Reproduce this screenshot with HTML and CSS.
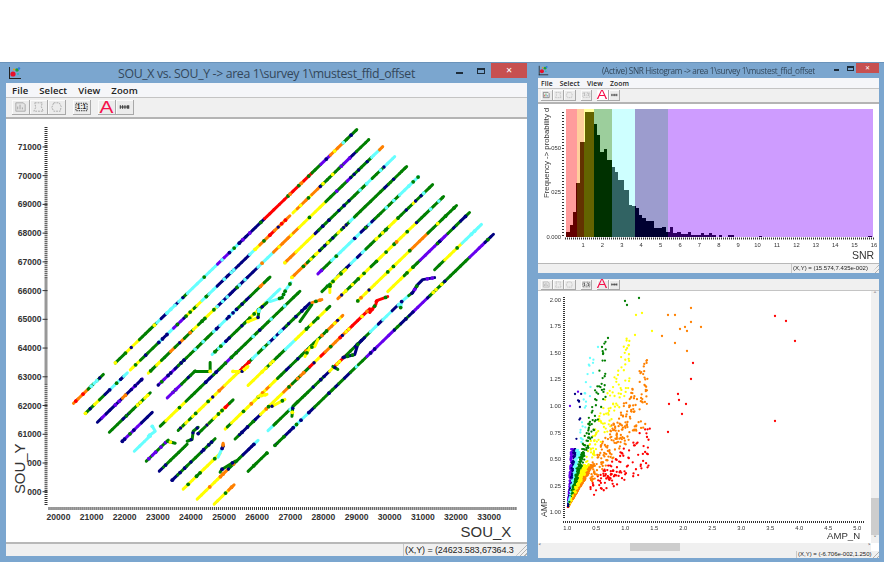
FILE: index.html
```html
<!DOCTYPE html>
<html lang="en">
<head>
    <meta charset="UTF-8">
    <meta name="viewport" content="width=device-width, initial-scale=1.0">
    <title>SOU_X vs. SOU_Y</title>
    <link rel="stylesheet" href="styles.css">
</head>
<body>
    <svg class="sprite" width="0" height="0">
        <symbol id="ico-app" viewBox="0 0 14 14">
            <rect x="1" y="1" width="1" height="12" fill="#222"/>
            <rect x="1" y="12" width="12" height="1" fill="#222"/>
            <circle cx="5" cy="8" r="2.6" fill="#e8102a"/>
            <circle cx="9" cy="4" r="1.8" fill="#1c9c3c"/>
            <circle cx="11" cy="2.5" r="1.2" fill="#2b7de0"/>
            <circle cx="10" cy="8" r="1" fill="#20b8c8"/>
            <circle cx="6" cy="3.5" r="1" fill="#e8a010"/>
        </symbol>
        <symbol id="ico-doc" viewBox="0 0 18 15">
            <path d="M4 3h8l2 2v7H4z" fill="#e4e4e4" stroke="#a8a8a8"/>
            <path d="M6 10V7M8.500 10V5M11 10V8" stroke="#a0a0a0"/>
        </symbol>
        <symbol id="ico-doc-on" viewBox="0 0 18 15">
            <path d="M4 3h8l2 2v7H4z" fill="#eee" stroke="#555"/>
            <path d="M6 10V7" stroke="#d01818"/>
            <path d="M8.500 10V5" stroke="#108a28"/>
            <path d="M11 10V8" stroke="#1838c0"/>
        </symbol>
        <symbol id="ico-sel" viewBox="0 0 18 15">
            <path d="M5 3h8l-1 4 2 5H4l2-4z" fill="none" stroke="#a8a8a8" stroke-dasharray="2 1"/>
        </symbol>
        <symbol id="ico-poly" viewBox="0 0 18 15">
            <path d="M6 3h6l2 4-1 5H6L4 8z" fill="none" stroke="#a8a8a8" stroke-dasharray="2 1"/>
        </symbol>
        <symbol id="ico-one" viewBox="0 0 18 15">
            <path d="M3 3.500h12v8H3z" fill="none" stroke="currentColor" stroke-dasharray="1.500 1"/>
            <text x="9" y="10" text-anchor="middle" font-family="Liberation Sans, sans-serif" font-size="7" font-weight="700" fill="currentColor">1:1</text>
        </symbol>
        <symbol id="ico-ticks" viewBox="0 0 18 15">
            <path d="M4 7.500h10M4.500 5.500v4M7 5.500v4M9.500 5.500v4M12 5.500v4M13.500 5.500v4" stroke="#333" fill="none"/>
        </symbol>
    </svg>

    <div class="desktop">
        <section class="win win-main">
            <header class="titlebar">
                <svg class="app-icon"><use href="#ico-app"/></svg>
                <span class="title-text">SOU_X vs. SOU_Y -&gt; area 1\survey 1\mustest_ffid_offset</span>
                <span class="btn-min"></span>
                <span class="btn-max"></span>
                <span class="btn-close">&#x2715;</span>
            </header>
            <nav class="menubar">
                <span>File</span><span>Select</span><span>View</span><span>Zoom</span>
            </nav>
            <div class="toolbar">
                <button class="tool"><svg><use href="#ico-doc"/></svg></button>
                <button class="tool"><svg><use href="#ico-sel"/></svg></button>
                <button class="tool"><svg><use href="#ico-poly"/></svg></button>
                <button class="tool tool-gap on"><svg><use href="#ico-one"/></svg></button>
                <button class="tool tool-gap tool-a"><span>A</span></button>
                <button class="tool"><svg><use href="#ico-ticks"/></svg></button>
            </div>
            <div class="canvas"><svg id="survey" class="plot" viewBox="6 119 521 424"></svg></div>
            <footer class="statusbar">
                <div class="status-pane">(X,Y) = (24623.583,67364.3</div>
                <div class="grip"></div>
            </footer>
        </section>

        <div class="side">
            <section class="win win-hist">
                <header class="titlebar">
                    <svg class="app-icon"><use href="#ico-app"/></svg>
                    <span class="title-text">(Active) SNR Histogram -&gt; area 1\survey 1\mustest_ffid_offset</span>
                    <span class="btn-min"></span>
                    <span class="btn-max"></span>
                    <span class="btn-close">&#x2715;</span>
                </header>
                <nav class="menubar">
                    <span>File</span><span>Select</span><span>View</span><span>Zoom</span>
                </nav>
                <div class="toolbar">
                    <button class="tool"><svg><use href="#ico-doc-on"/></svg></button>
                    <button class="tool"><svg><use href="#ico-sel"/></svg></button>
                    <button class="tool"><svg><use href="#ico-poly"/></svg></button>
                    <button class="tool tool-gap"><svg class="muted"><use href="#ico-one"/></svg></button>
                    <button class="tool tool-gap tool-a pressed"><span>A</span></button>
                    <button class="tool"><svg><use href="#ico-ticks"/></svg></button>
                </div>
                <div class="canvas"><svg id="histogram" class="plot" viewBox="538 104 341 159"></svg></div>
                <footer class="statusbar">
                    <div class="status-pane">(X,Y) = (15.574,7.435e-002)</div>
                    <div class="grip"></div>
                </footer>
            </section>

            <section class="win win-scatter">
                <div class="toolbar">
                    <button class="tool"><svg><use href="#ico-doc"/></svg></button>
                    <button class="tool"><svg><use href="#ico-sel"/></svg></button>
                    <button class="tool"><svg><use href="#ico-poly"/></svg></button>
                    <button class="tool tool-gap on"><svg><use href="#ico-one"/></svg></button>
                    <button class="tool tool-gap tool-a"><span>A</span></button>
                    <button class="tool"><svg><use href="#ico-ticks"/></svg></button>
                </div>
                <div class="scroll-area">
                    <div class="canvas"><svg id="scatter" class="plot" viewBox="538 291 333 252"></svg></div>
                    <div class="vscroll">
                        <span class="arrow">&#x2C4;</span>
                        <span class="vthumb"></span>
                        <span class="arrow">&#x2C5;</span>
                    </div>
                    <div class="hscroll">
                        <span class="arrow">&#x2C2;</span>
                        <span class="hthumb"></span>
                        <span class="arrow">&#x2C3;</span>
                    </div>
                </div>
                <footer class="statusbar">
                    <div class="status-pane">(X,Y) = (-6.706e-002,1.250)</div>
                    <div class="grip"></div>
                </footer>
            </section>
        </div>
    </div>

    <script src="plots.js"></script>
</body>
</html>
```

FILE: styles.css
```css
* {
    margin: 0;
    padding: 0;
    box-sizing: border-box;
}

body {
    font-family: "Open Sans", "Liberation Sans", sans-serif;
    background: white;
    color: #222;
    overflow: hidden;
}

.sprite {
    position: absolute;
}

.desktop {
    display: flex;
    height: 562px;
    padding-top: 62px;
    filter: blur(0.3px);
}

.win {
    display: flex;
    flex-direction: column;
    background: #7ba6cf;
    border-top: 1px solid #6a93ba;
}

.win-main {
    width: 534px;
    padding: 0 7px 6px 6px;
}

.side {
    flex: 1;
    display: flex;
    flex-direction: column;
}

.win-hist {
    height: 214px;
    padding: 0 5px 3px 4px;
}

.win-scatter {
    flex: 1;
    padding: 3px 5px 4px 4px;
    border-top: none;
}

/* Title bars */
.titlebar {
    height: 20px;
    flex: none;
    display: flex;
    align-items: center;
    position: relative;
}

.title-text {
    flex: 1;
    text-align: center;
    font-size: 12.300px;
    letter-spacing: -0.35px;
    color: #33475a;
    white-space: nowrap;
    padding-right: 16px;
}

.app-icon {
    width: 14px;
    height: 14px;
    margin-left: 2px;
}

.btn-min {
    position: absolute;
    left: 450px;
    top: 9px;
    width: 7px;
    height: 2px;
    background: #1d2c3a;
}

.btn-max {
    position: absolute;
    left: 471px;
    top: 5px;
    width: 8px;
    height: 6px;
    border: 1px solid #1d2c3a;
    border-top-width: 2px;
}

.btn-close {
    position: absolute;
    right: 0;
    top: 0;
    width: 36px;
    height: 15px;
    background: #c75050;
    color: white;
    font-family: "DejaVu Sans", sans-serif;
    font-size: 8px;
    font-weight: 700;
    line-height: 15px;
    text-align: center;
}

.win-hist .titlebar {
    height: 15px;
}

.win-hist .title-text {
    font-size: 8.200px;
    letter-spacing: -0.33px;
    padding-right: 11px;
}

.win-hist .app-icon {
    width: 11px;
    height: 11px;
    margin-left: 0;
}

.win-hist .btn-min {
    left: 296px;
    top: 6px;
    width: 5px;
}

.win-hist .btn-max {
    left: 309px;
    top: 3px;
    width: 7px;
    height: 5px;
}

.win-hist .btn-close {
    width: 23px;
    height: 10px;
    line-height: 10px;
    font-size: 6px;
}

/* Menus and toolbars */
.menubar {
    height: 14px;
    flex: none;
    display: flex;
    align-items: center;
    gap: 11px;
    padding-left: 6px;
    background: #f5f6f9;
    font-size: 9.500px;
    font-weight: 600;
    letter-spacing: 0.1px;
}

.win-hist .menubar {
    height: 10px;
    gap: 7px;
    padding-left: 3px;
    font-size: 6.800px;
}

.toolbar {
    height: 22px;
    flex: none;
    display: flex;
    align-items: center;
    padding-left: 6px;
    background: #f0f0f0;
    border-top: 1px solid #c4c4c4;
    border-bottom: 2px solid #b4b4b4;
}

.win-hist .toolbar {
    height: 16px;
    padding-left: 3px;
}

.win-scatter .toolbar {
    height: 12px;
    padding-left: 3px;
    border-top: none;
    border-bottom: 1px solid #c4c4c4;
}

.tool {
    width: 18px;
    height: 15px;
    display: flex;
    align-items: center;
    justify-content: center;
    background: #ececec;
    border: none;
    border-right: 1px solid #a8a8a8;
    border-bottom: 1px solid #a8a8a8;
    box-shadow: inset 1px 1px 0 #fbfbfb;
    font-family: "Liberation Sans", sans-serif;
}

.tool svg {
    width: 100%;
    height: 100%;
    color: #222;
}

.tool svg.muted {
    color: #a8a8a8;
}

.tool-gap {
    margin-left: 7px;
}

.tool-a {
    color: #f5104a;
    font-size: 16px;
    line-height: 15px;
}

.tool-a span {
    display: inline-block;
    transform: scaleX(1.3);
}

.tool.pressed {
    background: white;
}

.win-hist .tool,
.win-scatter .tool {
    width: 11.500px;
    height: 11px;
}

.win-scatter .tool {
    height: 10px;
}

.win-hist .tool-gap,
.win-scatter .tool-gap {
    margin-left: 5px;
}

.win-hist .tool-a,
.win-scatter .tool-a {
    font-size: 12px;
}

/* Plot areas */
.canvas {
    flex: 1;
    min-height: 0;
    background: white;
    display: flex;
}

.plot {
    width: 100%;
    height: 100%;
    font-family: "Liberation Sans", sans-serif;
}

.plot text {
    fill: #333;
}

.scroll-area {
    flex: 1;
    min-height: 0;
    display: grid;
    grid-template-columns: 1fr 8px;
    grid-template-rows: 1fr 8px;
    background: white;
}

.vscroll,
.hscroll {
    display: flex;
    align-items: center;
    justify-content: space-between;
    background: #f0f0f0;
    color: #555;
    font-family: "DejaVu Sans", sans-serif;
    font-size: 7px;
    line-height: 8px;
}

.vscroll {
    flex-direction: column;
}

.vthumb {
    width: 8px;
    height: 37px;
    margin-top: auto;
    background: #cdcdcd;
}

.hscroll {
    position: relative;
}

.hthumb {
    position: absolute;
    left: 92px;
    top: 0;
    width: 50px;
    height: 8px;
    background: #cdcdcd;
}

/* Status bars */
.statusbar {
    height: 14px;
    flex: none;
    display: flex;
    justify-content: flex-end;
    background: #f0f0f0;
    border-top: 2px solid #b8b8b8;
}

.status-pane {
    width: 113px;
    overflow: hidden;
    white-space: nowrap;
    padding-left: 1px;
    border-left: 1px solid #c8c8c8;
    font-family: "Liberation Sans", sans-serif;
    font-size: 9px;
    letter-spacing: -0.1px;
    line-height: 12px;
}

.grip {
    width: 11px;
    background: repeating-linear-gradient(135deg, #f0f0f0 0 2px, #b0b0b0 2px 3px);
    clip-path: polygon(100% 0, 100% 100%, 0 100%);
}

.win-hist .statusbar {
    height: 10px;
    border-top-width: 1px;
}

.win-scatter .statusbar {
    height: 7px;
    border-top: none;
}

.win-hist .status-pane {
    width: 81px;
    font-size: 6px;
    letter-spacing: 0;
    line-height: 9px;
}

.win-scatter .status-pane {
    width: 76px;
    font-size: 6px;
    letter-spacing: 0;
    line-height: 7px;
}

.win-hist .grip,
.win-scatter .grip {
    width: 7px;
}
```

FILE: plots.js
```js
const NS = 'http://www.w3.org/2000/svg';

const COLORS = {
    r: '#ff0000',
    o: '#ff8000',
    y: '#ffff00',
    g: '#007f00',
    c: '#66ffff',
    b: '#000080',
    p: '#6600ee'
};

// Small repeatable random so the picture stays the same between loads
let seed = 12345;
function rand() {
    seed = (seed * 16807) % 2147483647;
    return seed / 2147483647;
}

function between(low, high) {
    return low + rand() * (high - low);
}

function add(parent, tag, attrs, text) {
    const el = document.createElementNS(NS, tag);
    Object.keys(attrs).forEach(key => el.setAttribute(key, attrs[key]));
    if (text !== undefined) el.textContent = text;
    parent.appendChild(el);
    return el;
}

function label(parent, x, y, size, anchor, text, extra) {
    return add(parent, 'text', Object.assign({
        x: x, y: y, 'font-size': size, 'text-anchor': anchor
    }, extra || {}), text);
}

function dotted(parent, x1, y1, x2, y2, width, dash) {
    add(parent, 'line', {
        x1: x1, y1: y1, x2: x2, y2: y2,
        stroke: '#333', 'stroke-width': width, 'stroke-dasharray': dash
    });
}

// Survey map: parallel shot lines, each cut into coloured zones
const SLOPE = 0.966;
const SHOT_LINES = [
    { from: [73, 404], parts: [[73, 103], [115, 357]],
      zones: '85or 103gc 125gy 140yg 155gy 175bc 190gc 215cb 225pc 240cb 250bp 262bg 310ro 320yg 330pb 340oy 350gc 357gb' },
    { from: [85, 414], parts: [[85, 127], [130, 290], [293, 369]],
      zones: '103gy 127cb 140yg 155gb 170cb 185pb 200yg 215cg 232bc 250bc 262oy 290or 320oy 335gy 345gp 355bp 369gg' },
    { from: [97, 423], parts: [[97, 142], [148, 383]],
      zones: '120bp 130bo 142pb 160yg 190go 200gy 215yg 235bc 255bc 270co 290oy 305yo 320yg 330gy 350gp 370gc 375cc 383oo' },
    { from: [109, 433], parts: [[109, 150], [158, 270], [285, 395]],
      zones: '122gb 135bg 150gy 177pb 195gb 215gc 235cb 255gb 270go 295oy 315yg 340gb 355gb 370gc 385gc 395cc' },
    { from: [122, 442], parts: [[122, 152], [167, 195], [212, 280], [292, 407]],
      zones: '140pb 152bc 180gp 195gb 225cg 245gb 265yg 280cc 305oy 325gy 345gy 365gc 385gb 400gy 407gy' },
    { from: [134, 452], parts: [[134, 150], [160, 300], [318, 419]],
      zones: '150cc 190yg 205gy 225gb 240pg 255gc 270gb 285gc 300go 330gp 345cb 360cb 375bc 395gc 410cc 419cc' },
    { from: [146, 462], parts: [[146, 168], [178, 310], [322, 433]],
      zones: '168gp 190gy 210yg 235yo 250gr 265gc 285bc 310gb 320gy 335cg 350bg 365cb 385gy 400yg 415gy 433gc' },
    { from: [159, 472], parts: [[159, 187], [198, 233], [248, 330], [338, 444]],
      zones: '187gb 205gb 225yg 245gr 260yo 280gy 295cb 330yg 345yo 355gy 375yg 395yg 415yo 430gy 444gc' },
    { from: [172, 481], parts: [[172, 215], [225, 343], [358, 457]],
      zones: '195gb 225gb 245yg 275yo 290gb 305gy 325go 345oy 365yo 385yo 405yg 425oy 445gy 457gg' },
    { from: [183, 490], parts: [[183, 220], [235, 370], [388, 470]],
      zones: '210yg 235yo 250gb 260bg 290yo 305go 325ry 345or 365ry 385ro 400yo 420yg 445pb 458gb 470gb' },
    { from: [197, 500], parts: [[197, 258], [268, 400], [435, 482]],
      zones: '220yo 235go 250gb 265cb 300gc 325gb 345ry 370gb 400cb 420pb 440yg 460yg 470cc 482cc' },
    { from: [214, 505], parts: [[214, 234], [248, 267], [275, 494]],
      zones: '234yo 267gg 285bg 310cb 345gb 365gc 390pb 410gb 430pb 445gy 470gy 485pb 494bc' }
];

// Places where a line wanders off its straight path
const JOGS = [
    ['yg', [[330, 293], [330, 285], [338, 277], [346, 270]]],
    ['rr', [[370, 313], [376, 305], [377, 301], [388, 297]]],
    ['cb', [[401, 308], [402, 302], [409, 296]]],
    ['gc', [[409, 296], [413, 293]]],
    ['bp', [[413, 293], [418, 285], [423, 280], [435, 278]]],
    ['gy', [[300, 322], [312, 305]]],
    ['oo', [[312, 303], [322, 300]]],
    ['yg', [[305, 357], [310, 348], [315, 347], [318, 340]]],
    ['bg', [[343, 358], [355, 355], [358, 345], [365, 338]]],
    ['gb', [[333, 367], [338, 370]]],
    ['yo', [[272, 407], [285, 400]]],
    ['gy', [[292, 417], [293, 407], [298, 402]]],
    ['cg', [[270, 302], [282, 298], [286, 290], [291, 283]]],
    ['gy', [[195, 372], [210, 372], [210, 363]]],
    ['yy', [[233, 372], [242, 372], [248, 367]]],
    ['cc', [[152, 427], [155, 432], [148, 437]]],
    ['gy', [[167, 442], [175, 444]]],
    ['gb', [[187, 442], [192, 440], [193, 432], [198, 428]]],
    ['yy', [[248, 322], [258, 318]]],
    ['gc', [[258, 318], [259, 310], [267, 303]]],
    ['cb', [[218, 458], [223, 447]]],
    ['oo', [[223, 447], [223, 444]]],
    ['gb', [[220, 473], [222, 470], [235, 462]]],
    ['yy', [[258, 397], [267, 395]]]
];

const INK = { fill: 'none', 'stroke-width': 3, 'stroke-linecap': 'round', 'stroke-linejoin': 'round' };

function speckle(svg, x, y, main, speck) {
    const roll = rand();
    if (roll < 0.26) {
        add(svg, 'circle', { cx: x, cy: y, r: 1.9, fill: COLORS[speck] });
    } else if (roll < 0.35 && main !== 'g') {
        add(svg, 'circle', { cx: x, cy: y, r: 1.9, fill: COLORS.g });
    } else if (roll < 0.37 && main !== 'b') {
        add(svg, 'circle', { cx: x, cy: y, r: 1.7, fill: COLORS.b });
    }
}

function drawSurvey() {
    const svg = document.getElementById('survey');

    // Axes
    dotted(svg, 45.500, 127, 45.500, 507, 3, '1 1');
    dotted(svg, 48, 509.500, 518, 509.500, 3, '1 1');
    for (let v = 59000; v <= 71000; v += 1000) {
        const y = 147 + (71000 - v) * 0.0288;
        add(svg, 'line', { x1: 42, y1: y, x2: 47, y2: y, stroke: '#333' });
        // The rotated axis title hides the front of the two lowest labels
        const text = v <= 60000 ? '000' : v;
        label(svg, 41, y + 3, 8.600, 'end', text, { 'font-weight': 700 });
    }
    for (let v = 20000; v <= 33000; v += 1000) {
        const x = 58 + (v - 20000) * 0.0332;
        label(svg, x, 521, 8.600, 'middle', v, { 'font-weight': 700 });
    }

    label(svg, 24, 495, 15, 'start', 'SOU_Y', { transform: 'rotate(-90 24 495)' });
    label(svg, 461, 538, 15, 'start', 'SOU_X');

    // Shot lines
    SHOT_LINES.forEach(line => {
        const zones = line.zones.split(' ').map(z => ({
            end: parseInt(z, 10),
            main: z[z.length - 2],
            speck: z[z.length - 1]
        }));
        const yAt = x => line.from[1] - (x - line.from[0]) * SLOPE;
        line.parts.forEach(part => {
            let x = part[0];
            while (x < part[1]) {
                const next = Math.min(x + between(2, 6), part[1]);
                const zone = zones.find(z => x < z.end) || zones[zones.length - 1];
                const key = rand() < 0.18 ? zone.speck : zone.main;
                add(svg, 'line', Object.assign({}, INK, {
                    x1: x, y1: yAt(x), x2: next, y2: yAt(next), stroke: COLORS[key]
                }));
                speckle(svg, x, yAt(x), zone.main, zone.speck);
                x = next;
            }
        });
    });

    JOGS.forEach(jog => {
        add(svg, 'polyline', Object.assign({}, INK, {
            points: jog[1].map(p => p.join(',')).join(' '),
            stroke: COLORS[jog[0][0]]
        }));
        for (let i = 1; i < jog[1].length; i++) {
            const a = jog[1][i - 1];
            const b = jog[1][i];
            for (let t = 0; t < 1; t += 0.4) {
                speckle(svg, a[0] + (b[0] - a[0]) * t, a[1] + (b[1] - a[1]) * t, jog[0][0], jog[0][1]);
            }
        }
    });
}

// SNR histogram: coloured bands with darker bars on top
const BANDS = [
    [566, 577, '#ff9c9c', '#630000'],
    [577, 584, '#ffce9c', '#633100'],
    [584, 594, '#ffff9c', '#636300'],
    [594, 611.500, '#9cce9c', '#003100'],
    [611.500, 634.500, '#ceffff', '#316363'],
    [634.500, 668, '#9c9cce', '#000031'],
    [668, 873, '#ce9cff', '#310063']
];

// [left, right, top] of each bar
const BARS = [
    [566.300, 569.700, 231.700], [569.700, 573, 225], [573, 576.300, 211.700], [576.300, 579.700, 183],
    [579.700, 585, 142], [585, 589, 111.700], [589, 594, 112], [594, 597.300, 124],
    [597.300, 599.700, 135], [599.700, 604, 152], [604, 607.300, 149], [607.300, 611.700, 160],
    [611.700, 615, 167], [615, 618.300, 172], [618.300, 624, 180], [624, 629, 190],
    [629, 632.300, 205], [632.300, 635.700, 206], [635.700, 639.300, 208], [639.300, 642.300, 215],
    [642.300, 646.300, 218], [646.300, 654, 220.700], [654, 662.300, 228], [662.300, 665.700, 227],
    [665.700, 669.700, 232], [669.700, 673.300, 227], [673.300, 677.300, 233], [677.300, 680.700, 232],
    [680.700, 688, 234], [688, 691.300, 232], [691.300, 700.700, 235], [700.700, 704, 233],
    [704, 709, 235], [709, 711.700, 233], [712.300, 715.700, 235], [719, 722.300, 235],
    [728.300, 734, 235], [759, 762.300, 236], [868.300, 871.700, 235.500]
];

function drawHistogram() {
    const svg = document.getElementById('histogram');
    const bottom = 237;

    BANDS.forEach(band => {
        add(svg, 'rect', {
            x: band[0], y: 109, width: band[1] - band[0], height: bottom - 109,
            fill: band[2], 'shape-rendering': 'crispEdges'
        });
    });

    // A bar crossing a band edge is split so each side takes its band's colour
    BARS.forEach(bar => {
        BANDS.forEach(band => {
            const left = Math.max(bar[0], band[0]);
            const right = Math.min(bar[1], band[1]);
            if (right > left) {
                add(svg, 'rect', {
                    x: left, y: bar[2], width: right - left, height: bottom - bar[2],
                    fill: band[3], 'shape-rendering': 'crispEdges'
                });
            }
        });
    });

    dotted(svg, 563, 112, 563, 238, 2, '1 2');
    dotted(svg, 565, 238.500, 874, 238.500, 2, '1 1');
    for (let i = 1; i <= 16; i++) {
        label(svg, 563.600 + i * 19.4, 247, 5.800, 'middle', i);
    }
    label(svg, 561, 239, 5.800, 'end', '0.000');
    label(svg, 561, 194, 5.800, 'end', '025');
    label(svg, 561, 150, 5.800, 'end', '050');
    label(svg, 549, 198, 7.800, 'start', 'Frequency -> probability d', { transform: 'rotate(-90 549 198)' });
    label(svg, 852, 259, 10.500, 'start', 'SNR');
}

// Amplitude scatter: colour follows the steepness of the ray from the origin
function rayColor(slope) {
    if (slope < 1.05) return COLORS.r;
    if (slope < 1.9) return COLORS.o;
    if (slope < 2.9) return COLORS.y;
    if (slope < 4.5) return COLORS.g;
    if (slope < 7) return COLORS.c;
    if (slope < 11) return COLORS.b;
    return COLORS.p;
}

function drawScatter() {
    const svg = document.getElementById('scatter');
    const ox = 568;
    const oy = 507;

    dotted(svg, 564, 297, 564, 519, 2, '1 1');
    dotted(svg, 563, 522, 864, 522, 2, '1 1');

    ['2.00', '1.75', '1.50', '1.25', '1.00', '0.75', '0.50', '0.25', '1.00'].forEach((text, i) => {
        label(svg, 561, 301.500 + i * 26.6, 5.800, 'end', text);
    });
    ['1.0', '0.5', '1.0', '1.5', '2.0', '2.5', '3.0', '3.5', '4.0', '4.5', '5.0'].forEach((text, i) => {
        label(svg, 567.300 + i * 29, 530, 5.800, 'middle', text);
    });
    label(svg, 547, 517, 8.600, 'start', 'AMP', { transform: 'rotate(-90 547 517)' });
    label(svg, 827, 539, 9.600, 'start', 'AMP_N');

    const dot = (x, y) => {
        const slope = (oy - y) / Math.max(x - ox, 0.1);
        add(svg, 'circle', { cx: x, cy: y, r: 1.15, fill: rayColor(slope) });
    };

    // Dense wedge next to the origin, even across its width
    for (let i = 0; i < 1100; i++) {
        const lean = between(0.05, 0.62);
        const h = rand() * (lean > 0.3 ? 42 : 58);
        dot(ox + h * lean, oy - h);
    }

    // Sparse cloud further out, one group per colour: [count, slope low, slope high, dx low, dx high]
    const groups = [
        [110, 0.45, 1.05, 22, 82],
        [210, 1.05, 1.9, 22, 80],
        [110, 1.9, 2.9, 18, 62],
        [75, 2.9, 4.5, 14, 38],
        [28, 4.5, 7, 10, 26],
        [8, 7, 12, 8, 14]
    ];
    groups.forEach(group => {
        for (let i = 0; i < group[0]; i++) {
            const slope = between(group[1], group[2]);
            const dx = between(group[3], group[4]);
            const h = dx * slope;
            if (h < 170) dot(ox + dx, oy - h);
        }
    });

    const outliers = [
        [625, 301, COLORS.g], [627, 305, COLORS.g], [639, 298, COLORS.g], [636, 315, COLORS.y], [642, 313, COLORS.y],
        [652, 331, COLORS.y], [635, 335, COLORS.y], [668, 315, COLORS.o], [675, 315, COLORS.o], [691, 308, COLORS.o],
        [691, 322, COLORS.o], [685, 327, COLORS.o], [680, 329, COLORS.o], [687, 331, COLORS.o], [701, 327, COLORS.o],
        [662, 336, COLORS.o], [675, 343, COLORS.o], [687, 351, COLORS.o], [693, 363, COLORS.r], [691, 379, COLORS.r],
        [678, 394, COLORS.r], [679, 400, COLORS.r], [686, 404, COLORS.r], [669, 404, COLORS.r], [682, 414, COLORS.r],
        [668, 432, COLORS.r], [647, 437, COLORS.r], [775, 316, COLORS.r], [786, 321, COLORS.r], [795, 341, COLORS.r],
        [775, 421, COLORS.r], [608, 338, COLORS.g], [602, 347, COLORS.g], [598, 347, COLORS.c], [590, 358, COLORS.c],
        [575, 394, COLORS.b], [570, 406, COLORS.p], [579, 401, COLORS.b]
    ];
    outliers.forEach(p => add(svg, 'circle', { cx: p[0], cy: p[1], r: 1.15, fill: p[2] }));
}

drawSurvey();
drawHistogram();
drawScatter();
```
